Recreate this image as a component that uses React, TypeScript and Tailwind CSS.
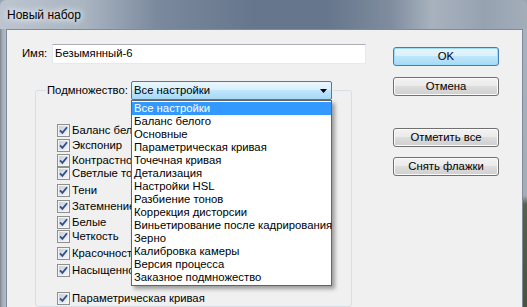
import React from 'react';

const subsets = [
  'Все настройки',
  'Баланс белого',
  'Основные',
  'Параметрическая кривая',
  'Точечная кривая',
  'Детализация',
  'Настройки HSL',
  'Разбиение тонов',
  'Коррекция дисторсии',
  'Виньетирование после кадрирования',
  'Зерно',
  'Калибровка камеры',
  'Версия процесса',
  'Заказное подмножество',
];

// labels as far as they show left of the open list; top margins copied from the dialog
const options = [
  { label: 'Баланс бело', mt: 'mt-[24px]' },
  { label: 'Экспонир', mt: 'mt-[2px]' },
  { label: 'Контрастно', mt: 'mt-[2px]' },
  { label: 'Светлые то', mt: 'mt-0' },
  { label: 'Тени', mt: 'mt-[4px]' },
  { label: 'Затемнение', mt: 'mt-[3px]' },
  { label: 'Белые', mt: 'mt-[3px]' },
  { label: 'Четкость', mt: 'mt-[1px]' },
  { label: 'Красочност', mt: 'mt-[4px]' },
  { label: 'Насыщенно', mt: 'mt-[4px]' },
  { label: 'Параметрическая кривая', mt: 'mt-[15px]' },
];

function CheckBox() {
  return (
    <svg width="13" height="13" viewBox="0 0 13 13" className="shrink-0">
      <defs>
        <linearGradient id="cb-fill" x1="0" y1="0" x2="1" y2="1">
          <stop offset="0" stopColor="#c9ced6" />
          <stop offset="1" stopColor="#f6f6f6" />
        </linearGradient>
      </defs>
      <rect x="0.5" y="0.5" width="12" height="12" fill="#f4f4f4" stroke="#8e8f8f" />
      <rect x="2" y="2" width="9" height="9" fill="url(#cb-fill)" />
      <path d="M3 6.3 L5.4 8.8 L10 3.2" fill="none" stroke="#2d4f8e" strokeWidth="1.8" />
    </svg>
  );
}

function Button({ children, primary }: { children: React.ReactNode; primary?: boolean }) {
  return (
    <div
      className={
        primary
          ? 'w-[106px] h-[19px] rounded-[3px] border border-[#3c7fb1] shadow-[inset_0_0_0_1px_#9fdcf9] bg-[linear-gradient(#e8f5fc_0%,#dbf0fb_45%,#bee6fd_50%,#a7d9f5_100%)] flex items-center justify-center'
          : 'w-[106px] h-[19px] rounded-[3px] border border-[#707070] shadow-[inset_0_0_0_1px_#fcfcfc] bg-[linear-gradient(#f2f2f2_0%,#ebebeb_45%,#dddddd_50%,#cfcfcf_100%)] flex items-center justify-center'
      }
    >
      {children}
    </div>
  );
}

export default function App() {
  return (
    <div className="w-[527px] h-[307px] overflow-hidden flex flex-col bg-[#9aa5b2] font-['Liberation_Sans',sans-serif] text-[11.3px] leading-none text-black whitespace-nowrap">
      <div className="h-[29px] shrink-0 flex items-center pl-[7px] rounded-t-[6px] bg-[linear-gradient(90deg,#bcc5cf_0%,#aab5c2_16%,#7a899d_30%,#66768c_48%,#66768c_62%,#7f8c9e_74%,#a8b2be_82%,#97a2b1_92%,#a3adba_100%)]">
        <span className="text-[12px] [text-shadow:0_0_6px_#fff,0_0_10px_#fff]">Новый набор</span>
      </div>

      <div className="flex flex-1 min-h-0">
        <div className="w-[6px] shrink-0 bg-[linear-gradient(90deg,#7d858e,#a3adb8_40%,#b3bcc6)]" />

        <div className="w-[517px] shrink-0 border-l border-t border-r border-[#7f8b99] bg-[#f0f0f0] flex pl-[15px] pt-[14px]">
          <div className="w-[344px] flex flex-col">
            <div className="flex items-center h-[20px]">
              <span className="w-[30px]">Имя:</span>
              <div className="flex-1 h-[20px] bg-white border border-[#e3e9ef] border-t-[#abadb3] flex items-center pl-[2px]">
                Безымянный-6
              </div>
            </div>

            <fieldset className="ml-[13px] mt-[17px] w-[317px] h-[260px] border border-[#d5dfe5] rounded-[3px] pl-[10px]">
              <legend className="flex items-center h-[19px] pr-[2px]">
                <span className="w-[85px] pl-[1px]">Подмножество:</span>
                <div className="relative">
                  <div className="w-[201px] h-[19px] rounded-[2px] border border-[#3c7fb1] bg-[linear-gradient(#eaf6fd_0%,#d9f0fc_45%,#bee6fd_50%,#a7d9f5_100%)] flex items-center pl-[2px]">
                    <span className="flex-1">Все настройки</span>
                    <svg width="7" height="4" viewBox="0 0 7 4" className="mr-[4px]">
                      <path d="M0 0 H7 L3.5 4 Z" fill="#000" />
                    </svg>
                  </div>
                  <ul className="absolute z-10 left-0 top-full w-[201px] bg-white border border-[#646464] py-[1px] shadow-[3px_3px_4px_rgba(0,0,0,0.35)]">
                    {subsets.map((s, i) => (
                      <li
                        key={s}
                        className={
                          i === 0
                            ? 'h-[13px] flex items-center pl-[2px] bg-[#3399ff] text-white'
                            : 'h-[13px] flex items-center pl-[2px]'
                        }
                      >
                        {s}
                      </li>
                    ))}
                  </ul>
                </div>
              </legend>

              {options.map((o) => (
                <div key={o.label} className={`flex items-center h-[13px] ml-[11px] ${o.mt}`}>
                  <CheckBox />
                  <span className="ml-[2px]">{o.label}</span>
                </div>
              ))}
            </fieldset>
          </div>

          <div className="ml-[27px] mt-[3px] flex flex-col">
            <Button primary>OK</Button>
            <div className="mt-[11px]">
              <Button>Отмена</Button>
            </div>
            <div className="mt-[32px]">
              <Button>Отметить все</Button>
            </div>
            <div className="mt-[10px]">
              <Button>Снять флажки</Button>
            </div>
          </div>
        </div>

        <div className="w-[4px] shrink-0 bg-[linear-gradient(#a8b2be_0%,#a3adb8_60%,#56604c_63%,#4a5342_100%)]" />
      </div>
    </div>
  );
}
